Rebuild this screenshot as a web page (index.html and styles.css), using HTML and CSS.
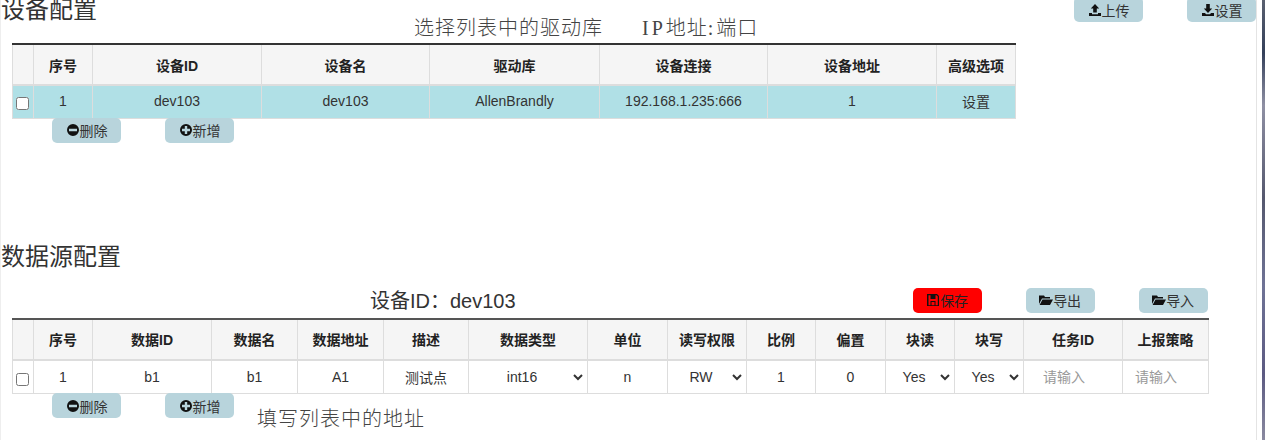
FILE: index.html
```html
<!DOCTYPE html>
<html lang="zh">
<head>
<meta charset="utf-8">
<title>设备配置</title>
<link rel="stylesheet" href="styles.css">
</head>
<body>
<svg class="defs" width="0" height="0" aria-hidden="true">
  <symbol id="i-minus" viewBox="0 0 14 14"><path fill-rule="evenodd" d="M7 1a6 6 0 1 0 0 12A6 6 0 0 0 7 1zM3 5.800h8v2.400H3z"/></symbol>
  <symbol id="i-plus" viewBox="0 0 14 14"><path fill-rule="evenodd" d="M7 1a6 6 0 1 0 0 12A6 6 0 0 0 7 1zM5.800 3h2.400v2.800H11v2.400H8.200V11H5.800V8.200H3V5.800h2.800z"/></symbol>
  <symbol id="i-up" viewBox="0 0 14 14"><path d="M7 1l4.200 4.500H8.800V9.500H5.200V5.500H2.800zM1 10h3v1.200h6V10h3v3H1z"/></symbol>
  <symbol id="i-down" viewBox="0 0 14 14"><path d="M5.200 1h3.600v4.500h2.400L7 10 2.800 5.500h2.400zM1 10h3l1 1.200h4L10 10h3v3H1z"/></symbol>
  <symbol id="i-folder" viewBox="0 0 14 14"><path d="M0 2.500h5l1 1.500h5v1.500H3L0 11zM3.500 6.500H14L11 12H.6z"/></symbol>
  <symbol id="i-save" viewBox="0 0 14 14"><path fill-rule="evenodd" d="M1 1h10l2 2v10H1zM2.500 2.200v10h2V8h5v4.200h2.300V3.500L10.500 2.200H9.500V6h-5V2.200zM5.500 9v3.200h3V9z"/></symbol>
</svg>
<main class="page">
  <section class="head-one">
    <h2 class="title title-top">设备配置</h2>
    <p class="note note-top"><span>选择列表中的驱动库</span><span><span class="half">IP</span>地址<span class="half">:</span>端口</span></p>
    <div class="top-actions">
      <button class="btn" type="button"><svg class="ico"><use href="#i-up"/></svg>上传</button>
      <button class="btn" type="button"><svg class="ico"><use href="#i-down"/></svg>设置</button>
    </div>
  </section>

  <table class="grid grid-one">
    <colgroup>
      <col class="c21"><col class="c59"><col class="c169"><col class="c168"><col class="c170"><col class="c168"><col class="c169"><col class="c79">
    </colgroup>
    <thead>
      <tr><th></th><th>序号</th><th>设备ID</th><th>设备名</th><th>驱动库</th><th>设备连接</th><th>设备地址</th><th>高级选项</th></tr>
    </thead>
    <tbody>
      <tr class="selected">
        <td class="check"><input type="checkbox"></td><td>1</td><td>dev103</td><td>dev103</td><td>AllenBrandly</td><td>192.168.1.235:666</td><td>1</td><td>设置</td>
      </tr>
    </tbody>
  </table>
  <div class="row-actions">
    <button class="btn" type="button"><svg class="ico"><use href="#i-minus"/></svg>删除</button>
    <button class="btn" type="button"><svg class="ico"><use href="#i-plus"/></svg>新增</button>
  </div>

  <h2 class="title title-data">数据源配置</h2>

  <section class="head-two">
    <p class="device-id">设备ID：dev103</p>
    <div class="data-actions">
      <button class="btn btn-save" type="button"><svg class="ico"><use href="#i-save"/></svg>保存</button>
      <button class="btn" type="button"><svg class="ico"><use href="#i-folder"/></svg>导出</button>
      <button class="btn" type="button"><svg class="ico"><use href="#i-folder"/></svg>导入</button>
    </div>
  </section>

  <table class="grid grid-two">
    <colgroup>
      <col class="c21"><col class="c59"><col class="c119"><col class="c86"><col class="c86"><col class="c85"><col class="c119"><col class="c80"><col class="c79"><col class="c69"><col class="c70"><col class="c69"><col class="c69"><col class="c99"><col class="c86">
    </colgroup>
    <thead>
      <tr><th></th><th>序号</th><th>数据ID</th><th>数据名</th><th>数据地址</th><th>描述</th><th>数据类型</th><th>单位</th><th>读写权限</th><th>比例</th><th>偏置</th><th>块读</th><th>块写</th><th>任务ID</th><th>上报策略</th></tr>
    </thead>
    <tbody>
      <tr>
        <td class="check"><input type="checkbox"></td><td>1</td><td>b1</td><td>b1</td><td>A1</td><td>测试点</td>
        <td class="pick"><select><option>int16</option></select></td>
        <td>n</td>
        <td class="pick"><select><option>RW</option></select></td>
        <td>1</td><td>0</td>
        <td class="pick"><select><option>Yes</option></select></td>
        <td class="pick"><select><option>Yes</option></select></td>
        <td class="entry"><input class="field field-task" type="text" placeholder="请输入"></td>
        <td class="entry"><input class="field" type="text" placeholder="请输入"></td>
      </tr>
    </tbody>
  </table>
  <div class="row-actions row-actions-two">
    <button class="btn" type="button"><svg class="ico"><use href="#i-minus"/></svg>删除</button>
    <button class="btn" type="button"><svg class="ico"><use href="#i-plus"/></svg>新增</button>
    <p class="note note-bottom">填写列表中的地址</p>
  </div>
</main>
<div class="edge"></div>
</body>
</html>
```

FILE: styles.css
```css
* { box-sizing: border-box; }
html, body { margin: 0; height: 440px; overflow: hidden; background: #fff; }
body {
  display: flex;
  font-family: "Liberation Sans", "Noto Sans CJK SC", sans-serif;
  font-size: 14px;
  color: #333;
}
.defs { position: absolute; }
.page {
  width: 1257px;
  height: 440px;
  flex: none;
  border-left: 1px solid #eee;
  border-right: 1px solid #e4e4e4;
  padding-left: 1px;
  overflow: hidden;
}
.edge {
  flex: 1;
  background: linear-gradient(180deg, #5a6070 0, #34405a 12%, #8f90a4 24%, #55586e 45%, #6f7396 65%, #5c5a82 85%, #8a8aa0 100%) right top / 3px 100% no-repeat;
}

.title {
  margin: 0 0 0 -1px;
  font-weight: 400;
  font-size: 24px;
  line-height: 32px;
  color: #333;
}
.head-one {
  display: flex;
  height: 49px;
  margin-top: -6px;
  align-items: flex-start;
}
.note {
  margin: 0;
  font-family: "Liberation Serif", "Noto Sans CJK SC", serif;
  font-size: 20px;
  font-weight: 300;
  letter-spacing: 1px;
  color: #444;
}
.half { letter-spacing: 3px; }
.note-top {
  display: flex;
  gap: 39px;
  margin: 21px 0 0 317px;
  line-height: 26px;
  white-space: nowrap;
}
.top-actions {
  display: flex;
  gap: 44px;
  margin: 3px 0 0 auto;
}

.btn {
  display: inline-flex;
  align-items: center;
  justify-content: center;
  width: 69px;
  height: 25px;
  padding: 0;
  border: 0;
  border-radius: 5px;
  background: #b8d4dc;
  font: inherit;
  color: #333;
}
.ico { width: 14px; height: 14px; fill: #111; flex: none; }
.btn-save { background: #f00; color: #222; }

.grid {
  table-layout: fixed;
  border-collapse: collapse;
  margin-left: 10px;
  text-align: center;
}
.grid-one { width: 1003px; }
.grid-two { width: 1196px; }
.grid th, .grid td { padding: 0; border: 1px solid #ddd; }
.grid th {
  height: 41px;
  background: #f5f5f5;
  border-top: 2px solid #333;
  border-bottom-width: 2px;
  font-weight: 700;
  color: #222;
}
.grid td { height: 33px; padding-bottom: 1px; color: #333; }
.grid-two td { height: 34px; padding-bottom: 0; }
.grid-two th { border-top-color: #555; }
.selected td { background: #b0e0e6; }
.check input { display: block; margin: 5px 0 0 3px; width: 13px; height: 13px; }

.c21 { width: 21px; } .c59 { width: 59px; } .c69 { width: 69px; } .c70 { width: 70px; }
.c79 { width: 79px; } .c80 { width: 80px; } .c85 { width: 85px; } .c86 { width: 86px; }
.c99 { width: 99px; } .c119 { width: 119px; } .c168 { width: 168px; } .c169 { width: 169px; } .c170 { width: 170px; }

.row-actions {
  display: flex;
  gap: 44px;
  height: 25px;
  margin: -1px 0 0 50px;
}
.title-data { margin-top: 98px; margin-left: -1px; }
.head-two {
  display: flex;
  height: 45px;
  padding-top: 15px;
}
.device-id {
  margin: 0 0 0 368px;
  font-size: 20px;
  line-height: 27px;
  color: #333;
}
.data-actions {
  display: flex;
  gap: 44px;
  margin-left: 397px;
}
.pick select {
  width: calc(100% - 2px);
  height: 30px;
  border: 0;
  background: #fff;
  font: inherit;
  color: #333;
  text-align: center;
  outline: 0;
}
.field {
  display: block;
  width: 100%;
  height: 30px;
  border: 0;
  padding: 0 0 0 12px;
  font: inherit;
  outline: 0;
}
.field-task { padding-left: 19px; }
.field::placeholder { color: #999; }
.row-actions-two .note-bottom { margin: 13px 0 0 -21px; line-height: 26px; }
```
